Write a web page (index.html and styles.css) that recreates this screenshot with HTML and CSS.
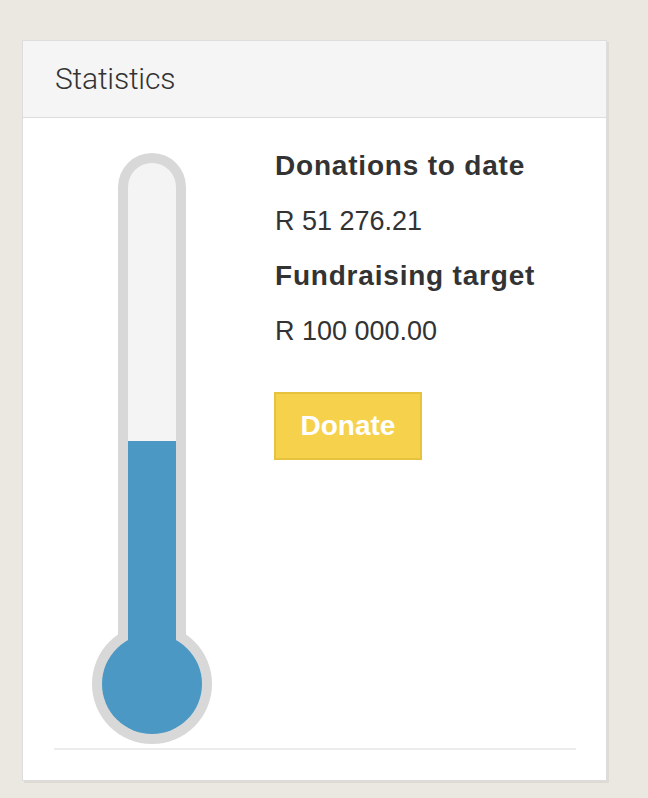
FILE: index.html
```html
<!DOCTYPE html>
<html lang="en">
<head>
<meta charset="utf-8">
<title>Statistics</title>
<link rel="stylesheet" href="styles.css">
</head>
<body>
<section class="card">
  <header class="card-header">
    <h2 class="card-title">Statistics</h2>
  </header>
  <div class="card-body">
    <div class="stats-row">
      <div class="thermo-col">
        <svg class="thermo" width="124" height="596" viewBox="90 150 124 596" aria-hidden="true">
          <rect x="118" y="152" width="68" height="520" rx="34" ry="34" fill="#d8d8d8"/>
          <circle cx="152" cy="683" r="60" fill="#d8d8d8"/>
          <rect x="128" y="162" width="48" height="510" rx="24" ry="24" fill="#f4f4f4"/>
          <rect x="128" y="440" width="48" height="243" fill="#4b98c4"/>
          <circle cx="152" cy="683" r="50" fill="#4b98c4"/>
        </svg>
      </div>
      <div class="info-col">
        <h3 class="info-label">Donations to date</h3>
        <p class="info-value">R 51 276.21</p>
        <h3 class="info-label">Fundraising target</h3>
        <p class="info-value">R 100 000.00</p>
        <button class="donate-btn" type="button">Donate</button>
      </div>
    </div>
    <div class="divider"></div>
  </div>
</section>
</body>
</html>
```

FILE: styles.css
```css
html, body {
  margin: 0;
  padding: 0;
}
body {
  background: #ebe7e1;
  font-family: "Liberation Sans", Arial, sans-serif;
  color: #333333;
  padding: 40px 0 0 22px;
  min-height: 798px;
  box-sizing: border-box;
}
.card {
  width: 585px;
  height: 741px;
  box-sizing: border-box;
  background: #ffffff;
  border: 1px solid #dddddd;
  box-shadow: 2px 2px 0 #dedbd6;
  display: flex;
  flex-direction: column;
}
.card-header {
  height: 76px;
  background: #f5f5f5;
  border-bottom: 1px solid #dddddd;
  box-sizing: content-box;
  padding-left: 32px;
  display: flex;
  align-items: flex-start;
}
.card-title {
  margin: 0;
  padding-top: 21px;
  font-family: Roboto, "Liberation Sans", sans-serif;
  font-weight: 300;
  font-size: 30px;
  line-height: 34px;
  color: #333333;
  letter-spacing: -0.2px;
}
.card-body {
  padding: 0 30px 0 31px;
}
.stats-row {
  display: flex;
  align-items: flex-start;
  height: 630px;
}
.thermo-col {
  width: 221px;
  padding-top: 33px;
  padding-left: 36px;
  box-sizing: border-box;
  flex: none;
}
.thermo {
  display: block;
}
.info-col {
  padding-top: 32px;
  display: flex;
  flex-direction: column;
  align-items: flex-start;
}
.info-label {
  margin: 0;
  font-size: 28px;
  line-height: 32px;
  font-weight: 700;
  letter-spacing: 0.8px;
  color: #333333;
}
.info-value {
  margin: 23px 0 0 0;
  font-size: 27px;
  line-height: 32px;
  font-weight: 400;
  color: #333333;
}
.info-value + .info-label {
  margin-top: 23px;
}
.donate-btn {
  margin-top: 45px;
  margin-left: -1px;
  width: 148px;
  height: 68px;
  box-sizing: border-box;
  border: 2px solid #e6c23e;
  background: #f6d14c;
  color: #ffffff;
  font-family: "Liberation Sans", Arial, sans-serif;
  font-weight: 700;
  font-size: 28px;
  line-height: 32px;
  padding: 0;
  cursor: pointer;
}
.divider {
  height: 2px;
  background: #ececec;
}
```
